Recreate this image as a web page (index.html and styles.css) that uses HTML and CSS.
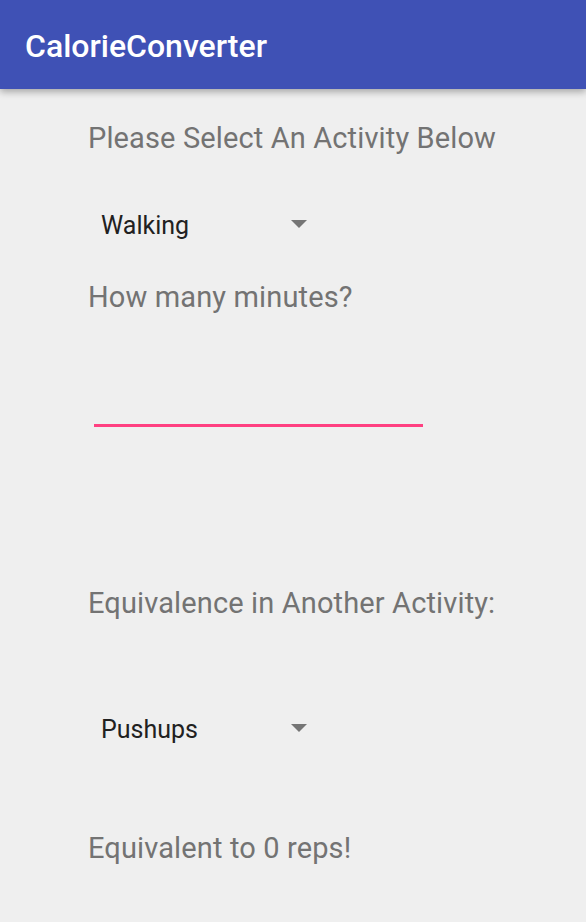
FILE: index.html
```html
<!DOCTYPE html>
<html>
<head>
<meta charset="utf-8">
<link rel="stylesheet" href="styles.css">
</head>
<body>
<header class="appbar"><span class="title">CalorieConverter</span></header>
<main class="content">
  <div class="label l1">Please Select An Activity Below</div>
  <div class="spinner s1"><span class="value">Walking</span><span class="arrow"></span></div>
  <div class="label l2">How many minutes?</div>
  <div class="edit"></div>
  <div class="label l3">Equivalence in Another Activity:</div>
  <div class="spinner s2"><span class="value">Pushups</span><span class="arrow"></span></div>
  <div class="label l4">Equivalent to 0 reps!</div>
</main>
</body>
</html>
```
FILE: styles.css
```css
html, body { margin: 0; padding: 0; }
body {
  width: 586px;
  height: 922px;
  background: #efefef;
  font-family: Roboto, "Noto Sans", sans-serif;
  overflow: hidden;
}
.appbar {
  box-sizing: border-box;
  height: 89px;
  background: #3f51b5;
  display: flex;
  align-items: flex-start;
  padding: 27px 0 0 25px;
  box-shadow: 0 3px 7px rgba(0,0,0,0.3);
  position: relative;
}
.title {
  color: #fff;
  font-size: 32px;
  line-height: 38px;
  font-weight: 500;
}
.content {
  display: flex;
  flex-direction: column;
  padding-left: 88px;
}
.label {
  color: #737373;
  font-size: 29px;
  line-height: 34px;
  letter-spacing: 0.13px;
}
.l1 { margin-top: 32px; }
.spinner {
  box-sizing: border-box;
  display: flex;
  align-items: center;
  width: 222px;
  padding-left: 13px;
  height: 40px;
  color: #212121;
  font-size: 25px;
}
.s1 { margin-top: 50px; }
.value { flex: 1; }
.arrow {
  width: 0; height: 0;
  border-left: 8px solid transparent;
  border-right: 8px solid transparent;
  border-top: 8px solid #757575;
  margin-right: 3px;
  margin-bottom: 3px;
}
.l2 { margin-top: 35px; }
.edit {
  margin-top: 110px;
  margin-left: 6px;
  width: 329px;
  height: 3px;
  background: #ff4081;
}
.l3 { margin-top: 159px; }
.s2 { margin-top: 89px; }
.l4 { margin-top: 82px; }
```
